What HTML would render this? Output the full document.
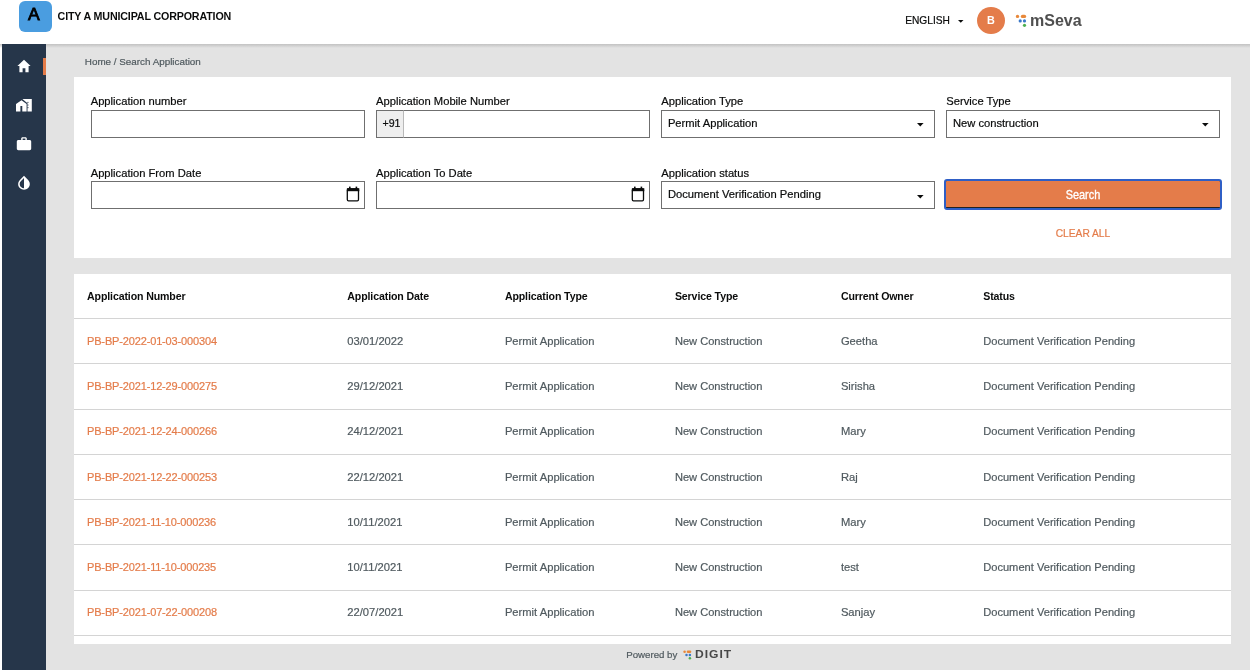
<!DOCTYPE html>
<html><head><meta charset="utf-8"><style>
html,body{margin:0;padding:0;}
body{width:1252px;height:672px;position:relative;overflow:hidden;background:#fff;font-family:"Liberation Sans",sans-serif;}
.t{position:absolute;line-height:1;white-space:nowrap;}
.r{position:absolute;box-sizing:border-box;}
</style></head><body><div style="position:absolute;left:0;top:0;width:1252px;height:672px;filter:blur(0.3px);">
<div class="r" style="left:46.00px;top:44.00px;width:1204.00px;height:626.00px;background:#e3e3e3;"></div>
<div class="r" style="left:0.00px;top:44.00px;width:1250.00px;height:3.50px;background:linear-gradient(#c2c2c2,rgba(227,227,227,0));"></div>
<div class="r" style="left:2.00px;top:44.00px;width:44.00px;height:626.00px;background:#26364a;"></div>
<div class="r" style="left:43.30px;top:58.00px;width:2.90px;height:16.50px;background:#e47c4a;"></div>
<div class="r" style="left:19.40px;top:0.60px;width:32.30px;height:31.30px;background:#4a9de0;border-radius:6px;"></div>
<div class="t" style="left:27.90px;top:7.39px;font-size:16.9px;color:#000;font-weight:400;-webkit-text-stroke:0.8px #000;transform:scaleX(1.04);transform-origin:0 0;">A</div>
<div class="t" style="left:57.60px;top:11.44px;font-size:10.7px;color:#0b0c0c;font-weight:700;letter-spacing:-0.15px;">CITY A MUNICIPAL CORPORATION</div>
<div class="t" style="left:905.20px;top:15.77px;font-size:10.2px;color:#0b0c0c;font-weight:400;-webkit-text-stroke:0.2px #0b0c0c;">ENGLISH</div>
<svg class="r" style="left:957.5px;top:20px" width="6" height="3"><path d="M0 0H5.5L2.75 2.8Z" fill="#0b0c0c"/></svg>
<div class="r" style="left:977.00px;top:6.60px;width:27.80px;height:27.20px;background:#e47c4a;border-radius:50%;"></div>
<div class="t" style="left:990.90px;transform:translateX(-50%);top:14.96px;font-size:10.8px;color:#fff;font-weight:700;">B</div>
<svg class="r" style="left:1014px;top:13px" width="14" height="15" viewBox="0 0 14 15">
<circle cx="3.5" cy="3.4" r="1.7" fill="#e8883a"/>
<rect x="6.8" y="1.7" width="5.4" height="3.4" rx="1.7" fill="#e8883a"/>
<circle cx="6.2" cy="7.9" r="1.6" fill="#3a78c9"/>
<circle cx="10.5" cy="7.9" r="1.6" fill="#3a78c9"/>
<circle cx="10.5" cy="12.3" r="1.6" fill="#4caf50"/>
</svg>
<div class="t" style="left:1030.00px;top:13.06px;font-size:16.0px;color:#4f4f4f;font-weight:700;">mSeva</div>
<div class="t" style="left:84.80px;top:56.65px;font-size:9.86px;color:#505a5f;font-weight:400;-webkit-text-stroke:0.2px #505a5f;">Home / Search Application</div>
<div class="r" style="left:74.00px;top:77.00px;width:1157.20px;height:180.60px;background:#fff;"></div>
<div class="t" style="left:90.70px;top:95.92px;font-size:11.2px;color:#0b0c0c;font-weight:400;-webkit-text-stroke:0.2px #0b0c0c;">Application number</div>
<div class="t" style="left:90.70px;top:167.92px;font-size:11.2px;color:#0b0c0c;font-weight:400;-webkit-text-stroke:0.2px #0b0c0c;">Application From Date</div>
<div class="t" style="left:376.00px;top:95.92px;font-size:11.2px;color:#0b0c0c;font-weight:400;-webkit-text-stroke:0.2px #0b0c0c;">Application Mobile Number</div>
<div class="t" style="left:376.00px;top:167.92px;font-size:11.2px;color:#0b0c0c;font-weight:400;-webkit-text-stroke:0.2px #0b0c0c;">Application To Date</div>
<div class="t" style="left:661.35px;top:95.92px;font-size:11.2px;color:#0b0c0c;font-weight:400;-webkit-text-stroke:0.2px #0b0c0c;">Application Type</div>
<div class="t" style="left:661.35px;top:167.92px;font-size:11.2px;color:#0b0c0c;font-weight:400;-webkit-text-stroke:0.2px #0b0c0c;">Application status</div>
<div class="t" style="left:946.35px;top:95.92px;font-size:11.2px;color:#0b0c0c;font-weight:400;-webkit-text-stroke:0.2px #0b0c0c;">Service Type</div>
<div class="r" style="left:90.60px;top:110.00px;width:274.00px;height:27.50px;border:1px solid #6f6f6f;background:#fff;"></div>
<div class="r" style="left:375.90px;top:110.00px;width:274.00px;height:27.50px;border:1px solid #6f6f6f;background:#fff;"></div>
<div class="r" style="left:661.25px;top:110.00px;width:274.00px;height:27.50px;border:1px solid #6f6f6f;background:#fff;"></div>
<div class="r" style="left:946.25px;top:110.00px;width:274.00px;height:27.50px;border:1px solid #6f6f6f;background:#fff;"></div>
<div class="r" style="left:375.90px;top:110.00px;width:28.60px;height:27.50px;border:1px solid #6f6f6f;border-right:1px solid #b9b9b9;background:#eeeeee;"></div>
<div class="t" style="left:382.50px;top:118.03px;font-size:10.6px;color:#0b0c0c;font-weight:400;-webkit-text-stroke:0.2px #0b0c0c;">+91</div>
<div class="t" style="left:667.90px;top:117.52px;font-size:11.2px;color:#0b0c0c;font-weight:400;-webkit-text-stroke:0.2px #0b0c0c;">Permit Application</div>
<div class="t" style="left:952.90px;top:117.52px;font-size:11.2px;color:#0b0c0c;font-weight:400;-webkit-text-stroke:0.2px #0b0c0c;">New construction</div>
<svg class="r" style="left:917.00px;top:122.90px" width="7" height="4"><path d="M0 0H6.6L3.3 3.6Z" fill="#0b0c0c"/></svg>
<svg class="r" style="left:1202.10px;top:122.90px" width="7" height="4"><path d="M0 0H6.6L3.3 3.6Z" fill="#0b0c0c"/></svg>
<div class="r" style="left:90.60px;top:181.40px;width:274.00px;height:27.50px;border:1px solid #6f6f6f;background:#fff;"></div>
<div class="r" style="left:375.90px;top:181.40px;width:274.00px;height:27.50px;border:1px solid #6f6f6f;background:#fff;"></div>
<div class="r" style="left:661.25px;top:181.40px;width:274.00px;height:27.50px;border:1px solid #6f6f6f;background:#fff;"></div>
<div class="t" style="left:667.90px;top:188.92px;font-size:11.2px;color:#0b0c0c;font-weight:400;-webkit-text-stroke:0.2px #0b0c0c;">Document Verification Pending</div>
<svg class="r" style="left:917.00px;top:195.00px" width="7" height="4"><path d="M0 0H6.6L3.3 3.6Z" fill="#0b0c0c"/></svg>
<svg class="r" style="left:345.60px;top:186.20px" width="14" height="16" viewBox="0 0 14 16">
<rect x="1.3" y="2.8" width="11.2" height="12" rx="1.2" fill="none" stroke="#0b0c0c" stroke-width="1.3"/>
<rect x="0.9" y="2.2" width="12.4" height="3" fill="#0b0c0c"/>
<rect x="3" y="0.6" width="1.6" height="2.6" fill="#0b0c0c"/>
<rect x="9.6" y="0.6" width="1.6" height="2.6" fill="#0b0c0c"/>
</svg>
<svg class="r" style="left:630.90px;top:186.20px" width="14" height="16" viewBox="0 0 14 16">
<rect x="1.3" y="2.8" width="11.2" height="12" rx="1.2" fill="none" stroke="#0b0c0c" stroke-width="1.3"/>
<rect x="0.9" y="2.2" width="12.4" height="3" fill="#0b0c0c"/>
<rect x="3" y="0.6" width="1.6" height="2.6" fill="#0b0c0c"/>
<rect x="9.6" y="0.6" width="1.6" height="2.6" fill="#0b0c0c"/>
</svg>
<div class="r" style="left:944.00px;top:178.90px;width:277.80px;height:31.00px;border:2px solid #2f5fc6;border-radius:3px;background:#222;"></div>
<div class="r" style="left:946.00px;top:180.70px;width:273.80px;height:26.20px;background:#e47c4a;border-radius:1px 1px 0 0;"></div>
<div class="t" style="left:1083.00px;top:188.20px;font-size:13.0px;color:#fff;font-weight:400;transform:translateX(-50%) scaleX(0.84);-webkit-text-stroke:0.35px #fff;">Search</div>
<div class="t" style="left:1055.70px;top:228.94px;font-size:10.23px;color:#e47c4a;font-weight:400;-webkit-text-stroke:0.2px #e47c4a;">CLEAR ALL</div>
<div class="r" style="left:74.00px;top:273.90px;width:1157.20px;height:370.00px;background:#fff;"></div>
<div class="t" style="left:87.00px;top:291.43px;font-size:10.6px;color:#0b0c0c;font-weight:700;letter-spacing:-0.12px;">Application Number</div>
<div class="t" style="left:347.30px;top:291.43px;font-size:10.6px;color:#0b0c0c;font-weight:700;letter-spacing:-0.12px;">Application Date</div>
<div class="t" style="left:504.90px;top:291.43px;font-size:10.6px;color:#0b0c0c;font-weight:700;letter-spacing:-0.12px;">Application Type</div>
<div class="t" style="left:674.90px;top:291.43px;font-size:10.6px;color:#0b0c0c;font-weight:700;letter-spacing:-0.12px;">Service Type</div>
<div class="t" style="left:840.90px;top:291.43px;font-size:10.6px;color:#0b0c0c;font-weight:700;letter-spacing:-0.12px;">Current Owner</div>
<div class="t" style="left:983.20px;top:291.43px;font-size:10.6px;color:#0b0c0c;font-weight:700;letter-spacing:-0.12px;">Status</div>
<div class="r" style="left:74.00px;top:318.00px;width:1157.20px;height:1.00px;background:#d4d4d4;"></div>
<div class="r" style="left:74.00px;top:363.00px;width:1157.20px;height:1.00px;background:#d4d4d4;"></div>
<div class="r" style="left:74.00px;top:409.00px;width:1157.20px;height:1.00px;background:#d4d4d4;"></div>
<div class="r" style="left:74.00px;top:454.00px;width:1157.20px;height:1.00px;background:#d4d4d4;"></div>
<div class="r" style="left:74.00px;top:499.00px;width:1157.20px;height:1.00px;background:#d4d4d4;"></div>
<div class="r" style="left:74.00px;top:544.00px;width:1157.20px;height:1.00px;background:#d4d4d4;"></div>
<div class="r" style="left:74.00px;top:590.00px;width:1157.20px;height:1.00px;background:#d4d4d4;"></div>
<div class="r" style="left:74.00px;top:635.00px;width:1157.20px;height:1.00px;background:#d4d4d4;"></div>
<div class="t" style="left:87.00px;top:335.89px;font-size:11px;color:#e47c4a;font-weight:400;letter-spacing:-0.15px;-webkit-text-stroke:0.2px #e47c4a;">PB-BP-2022-01-03-000304</div>
<div class="t" style="left:347.30px;top:335.72px;font-size:11.2px;color:#505a5f;font-weight:400;-webkit-text-stroke:0.2px #505a5f;">03/01/2022</div>
<div class="t" style="left:504.90px;top:335.72px;font-size:11.2px;color:#505a5f;font-weight:400;-webkit-text-stroke:0.2px #505a5f;">Permit Application</div>
<div class="t" style="left:674.90px;top:335.80px;font-size:11.1px;color:#505a5f;font-weight:400;-webkit-text-stroke:0.2px #505a5f;">New Construction</div>
<div class="t" style="left:840.90px;top:335.72px;font-size:11.2px;color:#505a5f;font-weight:400;-webkit-text-stroke:0.2px #505a5f;">Geetha</div>
<div class="t" style="left:983.20px;top:335.79px;font-size:11.12px;color:#505a5f;font-weight:400;-webkit-text-stroke:0.2px #505a5f;">Document Verification Pending</div>
<div class="t" style="left:87.00px;top:381.15px;font-size:11px;color:#e47c4a;font-weight:400;letter-spacing:-0.15px;-webkit-text-stroke:0.2px #e47c4a;">PB-BP-2021-12-29-000275</div>
<div class="t" style="left:347.30px;top:380.98px;font-size:11.2px;color:#505a5f;font-weight:400;-webkit-text-stroke:0.2px #505a5f;">29/12/2021</div>
<div class="t" style="left:504.90px;top:380.98px;font-size:11.2px;color:#505a5f;font-weight:400;-webkit-text-stroke:0.2px #505a5f;">Permit Application</div>
<div class="t" style="left:674.90px;top:381.06px;font-size:11.1px;color:#505a5f;font-weight:400;-webkit-text-stroke:0.2px #505a5f;">New Construction</div>
<div class="t" style="left:840.90px;top:380.98px;font-size:11.2px;color:#505a5f;font-weight:400;-webkit-text-stroke:0.2px #505a5f;">Sirisha</div>
<div class="t" style="left:983.20px;top:381.05px;font-size:11.12px;color:#505a5f;font-weight:400;-webkit-text-stroke:0.2px #505a5f;">Document Verification Pending</div>
<div class="t" style="left:87.00px;top:426.41px;font-size:11px;color:#e47c4a;font-weight:400;letter-spacing:-0.15px;-webkit-text-stroke:0.2px #e47c4a;">PB-BP-2021-12-24-000266</div>
<div class="t" style="left:347.30px;top:426.24px;font-size:11.2px;color:#505a5f;font-weight:400;-webkit-text-stroke:0.2px #505a5f;">24/12/2021</div>
<div class="t" style="left:504.90px;top:426.24px;font-size:11.2px;color:#505a5f;font-weight:400;-webkit-text-stroke:0.2px #505a5f;">Permit Application</div>
<div class="t" style="left:674.90px;top:426.32px;font-size:11.1px;color:#505a5f;font-weight:400;-webkit-text-stroke:0.2px #505a5f;">New Construction</div>
<div class="t" style="left:840.90px;top:426.24px;font-size:11.2px;color:#505a5f;font-weight:400;-webkit-text-stroke:0.2px #505a5f;">Mary</div>
<div class="t" style="left:983.20px;top:426.31px;font-size:11.12px;color:#505a5f;font-weight:400;-webkit-text-stroke:0.2px #505a5f;">Document Verification Pending</div>
<div class="t" style="left:87.00px;top:471.67px;font-size:11px;color:#e47c4a;font-weight:400;letter-spacing:-0.15px;-webkit-text-stroke:0.2px #e47c4a;">PB-BP-2021-12-22-000253</div>
<div class="t" style="left:347.30px;top:471.50px;font-size:11.2px;color:#505a5f;font-weight:400;-webkit-text-stroke:0.2px #505a5f;">22/12/2021</div>
<div class="t" style="left:504.90px;top:471.50px;font-size:11.2px;color:#505a5f;font-weight:400;-webkit-text-stroke:0.2px #505a5f;">Permit Application</div>
<div class="t" style="left:674.90px;top:471.58px;font-size:11.1px;color:#505a5f;font-weight:400;-webkit-text-stroke:0.2px #505a5f;">New Construction</div>
<div class="t" style="left:840.90px;top:471.50px;font-size:11.2px;color:#505a5f;font-weight:400;-webkit-text-stroke:0.2px #505a5f;">Raj</div>
<div class="t" style="left:983.20px;top:471.57px;font-size:11.12px;color:#505a5f;font-weight:400;-webkit-text-stroke:0.2px #505a5f;">Document Verification Pending</div>
<div class="t" style="left:87.00px;top:516.93px;font-size:11px;color:#e47c4a;font-weight:400;letter-spacing:-0.15px;-webkit-text-stroke:0.2px #e47c4a;">PB-BP-2021-11-10-000236</div>
<div class="t" style="left:347.30px;top:516.76px;font-size:11.2px;color:#505a5f;font-weight:400;-webkit-text-stroke:0.2px #505a5f;">10/11/2021</div>
<div class="t" style="left:504.90px;top:516.76px;font-size:11.2px;color:#505a5f;font-weight:400;-webkit-text-stroke:0.2px #505a5f;">Permit Application</div>
<div class="t" style="left:674.90px;top:516.84px;font-size:11.1px;color:#505a5f;font-weight:400;-webkit-text-stroke:0.2px #505a5f;">New Construction</div>
<div class="t" style="left:840.90px;top:516.76px;font-size:11.2px;color:#505a5f;font-weight:400;-webkit-text-stroke:0.2px #505a5f;">Mary</div>
<div class="t" style="left:983.20px;top:516.83px;font-size:11.12px;color:#505a5f;font-weight:400;-webkit-text-stroke:0.2px #505a5f;">Document Verification Pending</div>
<div class="t" style="left:87.00px;top:562.19px;font-size:11px;color:#e47c4a;font-weight:400;letter-spacing:-0.15px;-webkit-text-stroke:0.2px #e47c4a;">PB-BP-2021-11-10-000235</div>
<div class="t" style="left:347.30px;top:562.02px;font-size:11.2px;color:#505a5f;font-weight:400;-webkit-text-stroke:0.2px #505a5f;">10/11/2021</div>
<div class="t" style="left:504.90px;top:562.02px;font-size:11.2px;color:#505a5f;font-weight:400;-webkit-text-stroke:0.2px #505a5f;">Permit Application</div>
<div class="t" style="left:674.90px;top:562.10px;font-size:11.1px;color:#505a5f;font-weight:400;-webkit-text-stroke:0.2px #505a5f;">New Construction</div>
<div class="t" style="left:840.90px;top:562.02px;font-size:11.2px;color:#505a5f;font-weight:400;-webkit-text-stroke:0.2px #505a5f;">test</div>
<div class="t" style="left:983.20px;top:562.09px;font-size:11.12px;color:#505a5f;font-weight:400;-webkit-text-stroke:0.2px #505a5f;">Document Verification Pending</div>
<div class="t" style="left:87.00px;top:607.45px;font-size:11px;color:#e47c4a;font-weight:400;letter-spacing:-0.15px;-webkit-text-stroke:0.2px #e47c4a;">PB-BP-2021-07-22-000208</div>
<div class="t" style="left:347.30px;top:607.28px;font-size:11.2px;color:#505a5f;font-weight:400;-webkit-text-stroke:0.2px #505a5f;">22/07/2021</div>
<div class="t" style="left:504.90px;top:607.28px;font-size:11.2px;color:#505a5f;font-weight:400;-webkit-text-stroke:0.2px #505a5f;">Permit Application</div>
<div class="t" style="left:674.90px;top:607.36px;font-size:11.1px;color:#505a5f;font-weight:400;-webkit-text-stroke:0.2px #505a5f;">New Construction</div>
<div class="t" style="left:840.90px;top:607.28px;font-size:11.2px;color:#505a5f;font-weight:400;-webkit-text-stroke:0.2px #505a5f;">Sanjay</div>
<div class="t" style="left:983.20px;top:607.35px;font-size:11.12px;color:#505a5f;font-weight:400;-webkit-text-stroke:0.2px #505a5f;">Document Verification Pending</div>
<div class="t" style="left:626.20px;top:650.29px;font-size:9.7px;color:#505a5f;font-weight:400;-webkit-text-stroke:0.2px #505a5f;">Powered by</div>
<svg class="r" style="left:683px;top:649.5px" width="9" height="10" viewBox="0 0 9 10">
<circle cx="1.6" cy="1.7" r="1.3" fill="#e8883a"/>
<rect x="3.7" y="0.4" width="4.6" height="2.6" rx="1.3" fill="#e8883a"/>
<circle cx="3.5" cy="5" r="1.25" fill="#3a78c9"/>
<circle cx="6.9" cy="5" r="1.25" fill="#3a78c9"/>
<circle cx="6.9" cy="8.3" r="1.25" fill="#4caf50"/>
</svg>
<div class="t" style="left:694.80px;top:648.92px;font-size:11.2px;color:#484848;font-weight:700;letter-spacing:0.9px;transform:scaleX(1.08);transform-origin:0 0;">DIGIT</div>
<svg class="r" style="left:16px;top:58px" width="16" height="16" viewBox="0 0 16 16">
<path d="M8 1.8L1.4 8H3.4V14.2H6.6V10.2H9.4V14.2H12.6V8H14.6Z" fill="#fff"/>
</svg>
<svg class="r" style="left:14px;top:96px" width="20" height="18" viewBox="0 0 20 18">
<path d="M2 7.9L7.5 4.2L12.6 7.9V15.4H8.3V9.9H6.4V15.4H2Z" fill="#fff"/>
<path d="M8.4 2.9H17.8V15.4H13.5V7.2Z" fill="#fff"/>
<rect x="13.3" y="5.9" width="1.2" height="0.9" fill="#26364a"/>
<rect x="13.3" y="8.6" width="1.2" height="0.9" fill="#26364a"/>
<rect x="13.3" y="11.2" width="1.2" height="0.9" fill="#26364a"/>
</svg>
<svg class="r" style="left:16px;top:136px" width="16" height="16" viewBox="0 0 16 16">
<path d="M5.2 4V2.6C5.2 1.8 5.8 1.2 6.6 1.2H9.4C10.2 1.2 10.8 1.8 10.8 2.6V4H13.6C14.5 4 15.2 4.7 15.2 5.6V12.6C15.2 13.5 14.5 14.2 13.6 14.2H2.4C1.5 14.2 0.8 13.5 0.8 12.6V5.6C0.8 4.7 1.5 4 2.4 4ZM6.6 4H9.4V2.6H6.6Z" fill="#fff"/>
</svg>
<svg class="r" style="left:16px;top:174px" width="16" height="17" viewBox="0 0 16 17">
<path d="M8 1.8L3.9 5.9C1.6 8.2 1.6 11.9 3.9 14.1C5 15.3 6.5 15.8 8 15.8C9.5 15.8 11 15.3 12.1 14.1C14.4 11.9 14.4 8.2 12.1 5.9Z M8 14.3C6.9 14.3 5.8 13.9 5 13.1C4.2 12.3 3.7 11.2 3.7 10C3.7 8.8 4.2 7.8 5 7L8 4Z" fill="#fff" fill-rule="evenodd"/>
</svg>
</div></body></html>
